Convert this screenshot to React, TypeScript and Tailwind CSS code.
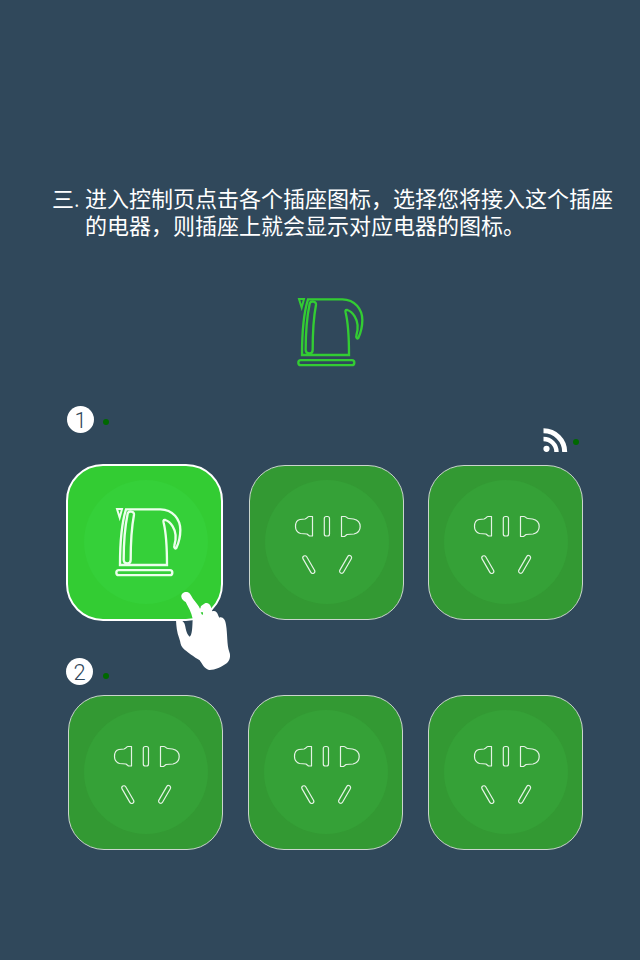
import React from "react";

function Kettle({ className }: { className: string }) {
  return (
    <svg
      viewBox="0 0 270 270"
      className={className}
      fill="none"
      stroke="currentColor"
      strokeWidth="7"
      strokeLinejoin="miter"
    >
      <path d="M42 42H57L50 68Z" strokeWidth="6" />
      <path d="M69 43H172C210 43 232 74 232 105C232 127 226 146 220 159C218 163 212 158 214 152C220 132 219 110 209 94C202 83 194 77 187 75C180 74 181 78 182 83C189 112 192 143 192 210H51C51 150 54 90 69 43Z" />
      <path d="M74 56C77 46 94 48 93 59C85 101 83 145 83 195C83 209 63 209 62 195C62 148 65 99 74 56Z" />
      <rect x="40" y="225.5" width="168" height="15" rx="7.5" />
    </svg>
  );
}

function SocketSlots() {
  return (
    <svg
      viewBox="0 0 155 155"
      className="size-[155px] shrink-0"
      fill="none"
      stroke="#e4f3e4"
      strokeWidth="1.2"
      strokeLinejoin="round"
    >
      <path d="M63.5 51.500H60C58.5 51.5 58 53.5 56 54L51 54.5C48 55 46.5 58 46.5 61.5C46.5 65 48.5 67.5 51.5 68.5L58 69L60.5 71H63.5Z" />
      <rect x="75.3" y="51.5" width="5.2" height="19.5" rx="2" />
      <path d="M92.5 51.5H96C97.5 51.5 98 53.5 100 53.5L104.5 54C109 55 111.2 58 111.2 61.5C111.2 65.5 109 68 105 69L98 69.5L95.5 71.5H92.5Z" />
      <rect x="-2.1" y="-9.9" width="4.2" height="19.8" rx="2.1" transform="translate(59.8 99.6) rotate(-30)" />
      <rect x="-2.1" y="-9.9" width="4.2" height="19.8" rx="2.1" transform="translate(96.6 99.4) rotate(30)" />
    </svg>
  );
}

function SocketTile() {
  return (
    <div className="relative size-[155px] shrink-0 overflow-hidden rounded-[36px] border border-[#c9d5cc] bg-[#339933]">
      <div className="absolute left-[15px] top-[14px] size-[124px] rounded-full bg-[#35a137]" />
      <div className="absolute -left-px -top-px">
        <SocketSlots />
      </div>
    </div>
  );
}

function Hand() {
  return (
    <svg viewBox="0 0 240 300" className="absolute left-[97px] top-[114px] h-[100px] w-[80px]" fill="#fff">
      <path
        fillRule="evenodd"
        d="M49 50C48 40 60 33 69 37C76 40 78 48 84 56C93 67 101 76 105 86L107 83C106 77 115 74 120 70C127 67 135 72 137 79L142 94C149 90 157 95 160 107L163 113C173 109 181 119 183 134C188 162 185 193 193 216C198 229 194 242 185 250C170 261 148 271 132 270C117 266 112 252 104 241C89 231 65 216 53 203C46 196 47 186 43 176C35 156 34 138 33 120C43 116 53 121 58 130C63 142 62 161 74 170C82 163 82 141 83 116C79 96 70 82 62 66C55 62 50 57 49 50ZM107 97H114V106L110 103Z"
      />
    </svg>
  );
}

function ActiveTile() {
  return (
    <div className="relative size-[157px] shrink-0 rounded-[37px] border-2 border-white bg-[#33cc33]">
      <div className="absolute left-[15.5px] top-[13.5px] size-[124px] rounded-full bg-[#35d039]" />
      <Kettle className="absolute left-[35px] top-[29px] size-[90px] text-[#ecffec]" />
      <Hand />
    </div>
  );
}

function Step({ n }: { n: number }) {
  return (
    <div className="flex size-[27px] items-center justify-center rounded-full bg-white pt-[2px] font-[Roboto,sans-serif] text-[22px] font-light leading-none text-[#30485b]">
      <span>{n}</span>
    </div>
  );
}

function Dot() {
  return <div className="size-[6px] shrink-0 rounded-full bg-[#006800]" />;
}

function Signal() {
  return (
    <svg viewBox="0 0 25 25" className="size-[25px] shrink-0">
      <circle cx="3.5" cy="20.8" r="3.1" fill="#fff" />
      <path d="M.5 11A13 13 0 0 1 13.5 24" fill="none" stroke="#fff" strokeWidth="4.4" />
      <path d="M.5 2.8A21.2 21.2 0 0 1 21.7 24" fill="none" stroke="#fff" strokeWidth="5" />
    </svg>
  );
}

export default function App() {
  return (
    <main className="flex h-[960px] w-[640px] flex-col overflow-hidden bg-[#30485b] font-['Noto_Sans_CJK_SC',sans-serif] text-white">
      <div className="mt-[184px] flex h-[54px] shrink-0 pl-[52px] text-[22px] leading-[27px]">
        <span className="w-[33px] shrink-0">
          三<span className="font-light">.</span>
        </span>
        <p className="whitespace-nowrap">
          进入控制页点击各个插座图标，选择您将接入这个插座
          <br />
          的电器，则插座上就会显示对应电器的图标。
        </p>
      </div>

      <Kettle className="ml-[285px] mt-[47px] size-[90px] shrink-0 text-[#33cc33]" />

      <div className="mt-[31px] flex h-[58px] shrink-0 items-start pl-[67px]">
        <Step n={1} />
        <div className="ml-[9px] mt-[13px]">
          <Dot />
        </div>
        <div className="ml-[434px] mt-[22px] flex items-start gap-[5px]">
          <Signal />
          <div className="pt-[11px]">
            <Dot />
          </div>
        </div>
      </div>

      <div className="flex h-[157px] shrink-0 items-start pl-[66px]">
        <ActiveTile />
        <div className="ml-[26px] mt-px flex gap-[24px]">
          <SocketTile />
          <SocketTile />
        </div>
      </div>

      <div className="mt-[37px] flex h-[37px] shrink-0 items-start pl-[66px]">
        <Step n={2} />
        <div className="ml-[10px] mt-[15px]">
          <Dot />
        </div>
      </div>

      <div className="flex shrink-0 gap-[25px] pl-[68px]">
        <SocketTile />
        <SocketTile />
        <SocketTile />
      </div>
    </main>
  );
}
